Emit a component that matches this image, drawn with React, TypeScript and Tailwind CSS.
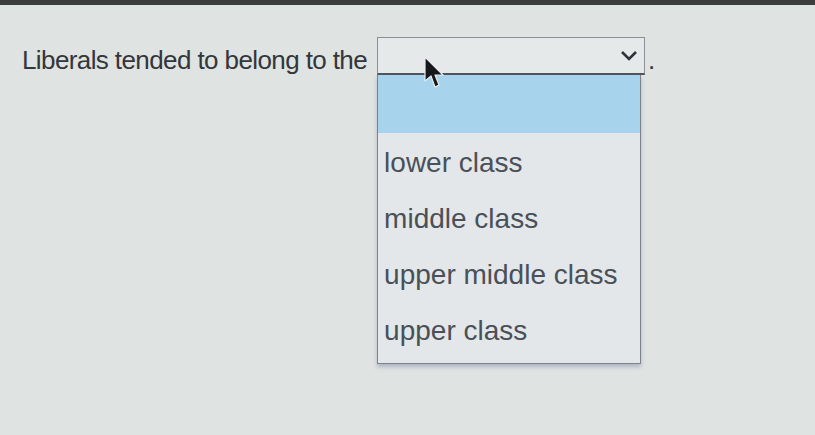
import React from 'react';

const options = ['lower class', 'middle class', 'upper middle class', 'upper class'];

const Cursor: React.FC = () => (
  <svg
    className="absolute left-[424px] top-[56px]"
    width="22"
    height="34"
    viewBox="0 0 22 34"
  >
    <path
      d="M1 1 L1 25 L7 20 L11 31 L15 29 L11 19 L19 19 Z"
      fill="#15171a"
      stroke="#e8ecee"
      strokeWidth="1.2"
      strokeLinejoin="round"
    />
  </svg>
);

const App: React.FC = () => {
  return (
    <div className="relative w-[815px] h-[435px] overflow-hidden bg-[#dfe3e2] font-['Liberation_Sans',Arial,sans-serif]">
      <div className="h-[5px] bg-[#3b3d3c]" />

      <div className="flex items-start pl-[22px] pt-[32px]">
        <span className="mt-[8px] text-[26px] leading-[30px] tracking-[-0.6px] text-[#33363a] whitespace-nowrap">
          Liberals tended to belong to the
        </span>

        <div className="flex flex-col ml-[10px]">
          <div className="flex items-center justify-end w-[268px] h-[38px] border border-[#8a8f94] border-b-[#50555b] border-b-2 bg-[#e6e9ea] pr-[6px]">
            <svg width="18" height="11" viewBox="0 0 18 11">
              <path d="M2 2 L9 9 L16 2" fill="none" stroke="#2f3338" strokeWidth="2.6" />
            </svg>
          </div>

          <div className="w-[264px] border border-[#7c828a] border-t-0 bg-[#e3e7e9] shadow-[0_3px_4px_rgba(90,100,140,0.35)]">
            <div className="h-[58px] bg-[#a8d3ec]" />
            <div className="flex flex-col pt-[2px] pb-[4px]">
              {options.map((o) => (
                <div
                  key={o}
                  className="h-[56px] flex items-center pl-[6px] text-[28px] text-[#4a5058]"
                >
                  {o}
                </div>
              ))}
            </div>
          </div>
        </div>

        <span className="mt-[8px] ml-[3px] text-[26px] leading-[30px] text-[#33363a]">.</span>
      </div>

      <Cursor />
    </div>
  );
};

export default App;
